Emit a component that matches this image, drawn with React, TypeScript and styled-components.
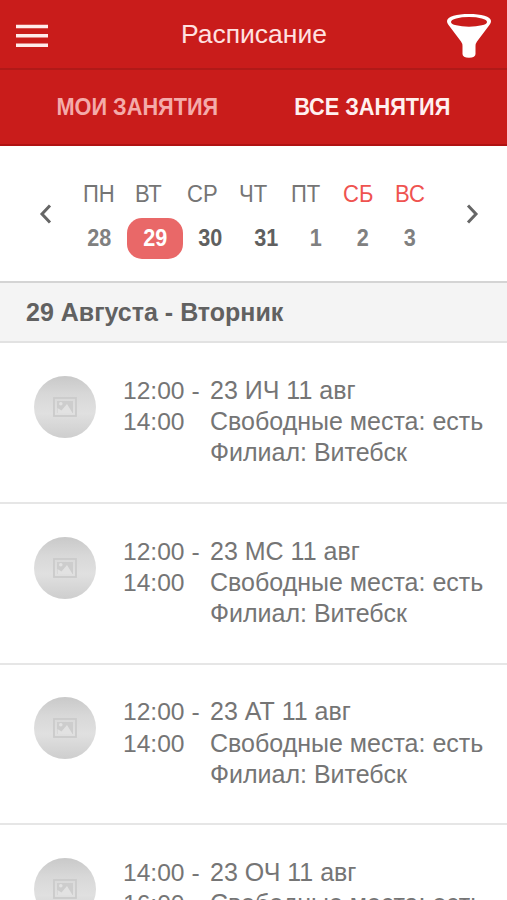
import React from "react";
import styled, { createGlobalStyle } from "styled-components";

const GlobalStyle = createGlobalStyle`
  * { box-sizing: border-box; }
  body { margin: 0; background: #fff; overflow: hidden; }
`;

const Screen = styled.main`
  display: flex;
  flex-direction: column;
  width: 507px;
  height: 900px;
  overflow: hidden;
  background: #fff;
  color: #757575;
  font-family: "Liberation Sans", Arial, sans-serif;
`;

const TopBar = styled.header`
  flex: none;
  display: grid;
  grid-template-columns: 64px 1fr 64px;
  align-items: center;
  height: 70px;
  background: #c91c1b;
  border-bottom: 2px solid #b01918;
`;

const IconButton = styled.button`
  display: flex;
  align-items: center;
  justify-content: center;
  padding: 0;
  border: 0;
  background: none;
  color: inherit;
`;

const FilterButton = styled(IconButton)`
  padding: 2px 12px 0 0;
`;

const Title = styled.h1`
  margin: 0;
  padding-left: 1px;
  text-align: center;
  font-size: 26.5px;
  font-weight: 400;
  line-height: 69px;
  color: #ffe1e0;
`;

const Tabs = styled.nav`
  flex: none;
  display: flex;
  height: 76px;
  padding: 0 17px 0 20px;
  background: #c91c1b;
  border-bottom: 2px solid #b01212;
`;

const Tab = styled.button<{ $active?: boolean }>`
  flex: 1;
  padding: 0;
  border: 0;
  background: none;
  font: 700 24px/74px "Liberation Sans", Arial, sans-serif;
  color: ${(p) => (p.$active ? "#fff0ef" : "#f4abaa")};
`;

const Condensed = styled.span<{ $scale: number; $origin?: string }>`
  display: inline-block;
  transform: scaleX(${(p) => p.$scale});
  transform-origin: ${(p) => p.$origin ?? "center"};
`;

const Calendar = styled.section`
  flex: none;
  display: grid;
  grid-template-columns: 72px 1fr 72px;
  height: 135px;
  padding-top: 32px;
`;

const ArrowButton = styled(IconButton)<{ $side: "left" | "right" }>`
  height: 72px;
  padding-${(p) => p.$side}: 18px;
`;

const Week = styled.div``;

const WeekDays = styled.div`
  display: flex;
  padding-left: 10px;
`;

const WeekDay = styled.span<{ $weekend?: boolean }>`
  width: 52px;
  padding-left: 0.5px;
  font-size: 24.5px;
  line-height: 31px;
  color: ${(p) => (p.$weekend ? "#ef5350" : "#757575")};
`;

const Dates = styled.div`
  display: flex;
  margin-top: 9px;
`;

const DateCell = styled.span<{ $width: number; $tone: string }>`
  flex: none;
  display: flex;
  justify-content: center;
  width: ${(p) => p.$width}px;
  font-size: 24px;
  font-weight: 700;
  line-height: 40px;
  color: ${(p) => p.$tone};
`;

const Selected = styled.span`
  flex: none;
  width: 56px;
  height: 41px;
  border-radius: 15px;
  background: #e96868;
  text-align: center;
`;

const DayHeading = styled.h2`
  flex: none;
  height: 62px;
  margin: 0;
  padding-left: 26px;
  border-top: 2px solid #d4d4d4;
  border-bottom: 2px solid #e2e2e2;
  background: #f4f4f4;
  font-size: 25px;
  font-weight: 700;
  line-height: 59px;
  color: #616161;
`;

const Lesson = styled.article`
  flex: none;
  display: grid;
  grid-template-columns: 123px 87px 1fr;
  height: 160.8px;
  padding-top: 31.8px;
  border-bottom: 2px solid #e6e6e6;
  font-size: 25px;
  line-height: 31.3px;
  white-space: nowrap;
`;

const Avatar = styled.div`
  display: flex;
  align-items: center;
  justify-content: center;
  width: 62px;
  height: 62px;
  margin: 1px 0 0 34px;
  border-radius: 50%;
  background: linear-gradient(#c9c9c9, #d8d8d8 30%, #e0e0e0 60%, #cecece);
`;

const Time = styled.div`
  font-size: 24.6px;
`;

const Details = styled.div``;

const MenuIcon = () => (
  <svg width="32" height="24" viewBox="0 0 32 24" stroke="#ffecec" strokeWidth="3.4">
    <path d="M0 3.500h32M0 12.800h32M0 22.200h32" />
  </svg>
);

const FunnelIcon = () => (
  <svg width="46" height="46" viewBox="0 0 46 46">
    <path fill="#fff" d="M1 8C1 3.500 11 1 23 1s22 2.500 22 7c0 2-1.200 3.600-2.500 5.200L31 28.500Q29.500 30.500 29.500 33v8q0 3.700-6.500 3.700T16.500 41v-8q0-2.500-1.500-4.500L3.500 13.200C2.200 11.600 1 10 1 8Z" />
    <ellipse cx="23" cy="8.900" rx="18" ry="4.900" fill="#c91c1b" />
  </svg>
);

const Chevron = ({ d }: { d: string }) => (
  <svg width="14" height="22" viewBox="0 0 14 22" fill="none" stroke="#666" strokeWidth="3">
    <path d={d} />
  </svg>
);

const PictureIcon = () => (
  <svg width="24" height="20" viewBox="0 0 24 20" fill="none">
    <rect x="1" y="1" width="22" height="18" stroke="#cbcbcb" strokeWidth="1.800" />
    <rect x="4" y="4" width="16" height="12" fill="#cdcdcd" />
    <path d="M4.500 16v-5l4 2.500L14 7l5.500 9Z" fill="#e2e2e2" />
    <circle cx="7.800" cy="6.800" r="1.800" fill="#e2e2e2" />
  </svg>
);

const weekDays = ["ПН", "ВТ", "СР", "ЧТ", "ПТ", "СБ", "ВС"];

const dates = [
  { label: "28", width: 55.5, tone: "#808080" },
  { label: "29", width: 55.5, tone: "#fff", selected: true },
  { label: "30", width: 55.5, tone: "#606060" },
  { label: "31", width: 55, tone: "#606060" },
  { label: "1", width: 45, tone: "#808080" },
  { label: "2", width: 49, tone: "#808080" },
  { label: "3", width: 45, tone: "#808080" },
];

const lessons = [
  { from: "12:00", to: "14:00", name: "23 ИЧ 11 авг" },
  { from: "12:00", to: "14:00", name: "23 МС 11 авг" },
  { from: "12:00", to: "14:00", name: "23 АТ 11 авг" },
  { from: "14:00", to: "16:00", name: "23 ОЧ 11 авг" },
];

export default function App() {
  return (
    <Screen>
      <GlobalStyle />
      <TopBar>
        <IconButton aria-label="Меню"><MenuIcon /></IconButton>
        <Title>Расписание</Title>
        <FilterButton aria-label="Фильтр"><FunnelIcon /></FilterButton>
      </TopBar>
      <Tabs>
        <Tab><Condensed $scale={0.905}>МОИ ЗАНЯТИЯ</Condensed></Tab>
        <Tab $active><Condensed $scale={0.905}>ВСЕ ЗАНЯТИЯ</Condensed></Tab>
      </Tabs>
      <Calendar>
        <ArrowButton $side="left" aria-label="Назад"><Chevron d="M12 2.500 4 11l8 8.500" /></ArrowButton>
        <Week>
          <WeekDays>
            {weekDays.map((day, i) => (
              <WeekDay key={day} $weekend={i > 4}>
                <Condensed $scale={0.9} $origin="left">{day}</Condensed>
              </WeekDay>
            ))}
          </WeekDays>
          <Dates>
            {dates.map((date) => {
              const label = <Condensed $scale={0.9}>{date.label}</Condensed>;
              return (
                <DateCell key={date.label} $width={date.width} $tone={date.tone}>
                  {date.selected ? <Selected>{label}</Selected> : label}
                </DateCell>
              );
            })}
          </Dates>
        </Week>
        <ArrowButton $side="right" aria-label="Вперёд"><Chevron d="m2 2.500 8 8.500-8 8.500" /></ArrowButton>
      </Calendar>
      <DayHeading>29 Августа - Вторник</DayHeading>
      {lessons.map((lesson) => (
        <Lesson key={lesson.name}>
          <Avatar><PictureIcon /></Avatar>
          <Time>{lesson.from} -<br />{lesson.to}</Time>
          <Details>
            {lesson.name}<br />Свободные места: есть<br />Филиал: Витебск
          </Details>
        </Lesson>
      ))}
    </Screen>
  );
}
